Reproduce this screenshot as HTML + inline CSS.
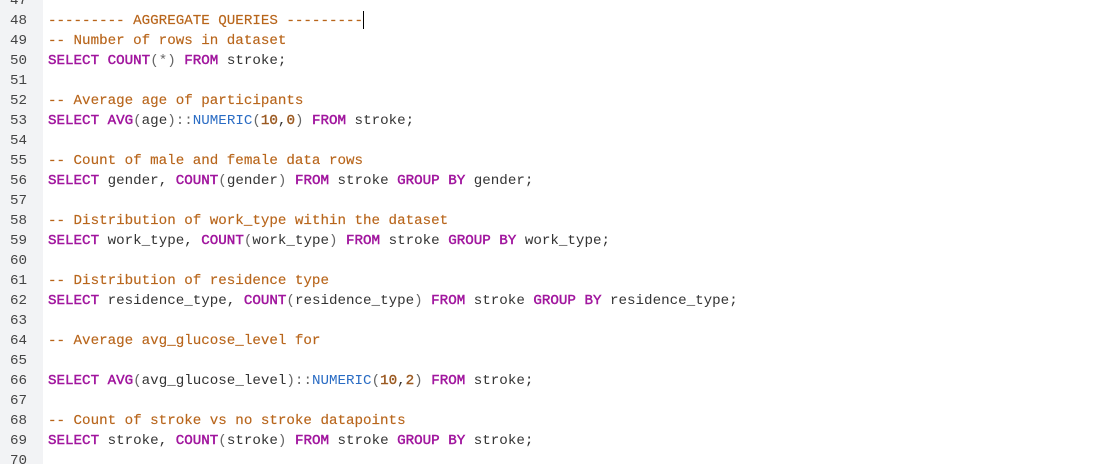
<!DOCTYPE html>
<html><head><style>
html,body{margin:0;padding:0;width:1104px;height:464px;overflow:hidden;background:#fff}
.g{position:absolute;left:0;top:0;width:43px;height:464px;background:#f2f3f5}
.code{position:absolute;left:0;top:-9px;font-family:"Liberation Mono",monospace;font-size:14.2px;color:#333}
.l{height:20px;line-height:20px;white-space:pre;position:relative}
.n{position:absolute;left:0;width:27px;text-align:right;color:#444}
.t{position:absolute;left:48px}
.k{color:#a1169e;-webkit-text-stroke:0.45px #a1169e}
.c{color:#b8651b;-webkit-text-stroke:0.15px #b8651b}
.u{color:#2a6cc4}
.d{color:#9b5a22;-webkit-text-stroke:0.4px #9b5a22}
.p{color:#666}
.cur{display:inline-block;width:1px;height:18px;background:#000;vertical-align:middle}
</style></head><body>
<div class="g"></div>
<div class="code">
<div class="l"><span class="n">47</span></div>
<div class="l"><span class="n">48</span><span class="t"><span class="c">--------- AGGREGATE QUERIES ---------</span><span class="cur"></span></span></div>
<div class="l"><span class="n">49</span><span class="t"><span class="c">-- Number of rows in dataset</span></span></div>
<div class="l"><span class="n">50</span><span class="t"><span class="k">SELECT</span> <span class="k">COUNT</span><span class="p">(*)</span> <span class="k">FROM</span> stroke;</span></div>
<div class="l"><span class="n">51</span></div>
<div class="l"><span class="n">52</span><span class="t"><span class="c">-- Average age of participants</span></span></div>
<div class="l"><span class="n">53</span><span class="t"><span class="k">SELECT</span> <span class="k">AVG</span><span class="p">(</span>age<span class="p">)::</span><span class="u">NUMERIC</span><span class="p">(</span><span class="d">10</span>,<span class="d">0</span><span class="p">)</span> <span class="k">FROM</span> stroke;</span></div>
<div class="l"><span class="n">54</span></div>
<div class="l"><span class="n">55</span><span class="t"><span class="c">-- Count of male and female data rows</span></span></div>
<div class="l"><span class="n">56</span><span class="t"><span class="k">SELECT</span> gender, <span class="k">COUNT</span><span class="p">(</span>gender<span class="p">)</span> <span class="k">FROM</span> stroke <span class="k">GROUP</span> <span class="k">BY</span> gender;</span></div>
<div class="l"><span class="n">57</span></div>
<div class="l"><span class="n">58</span><span class="t"><span class="c">-- Distribution of work_type within the dataset</span></span></div>
<div class="l"><span class="n">59</span><span class="t"><span class="k">SELECT</span> work_type, <span class="k">COUNT</span><span class="p">(</span>work_type<span class="p">)</span> <span class="k">FROM</span> stroke <span class="k">GROUP</span> <span class="k">BY</span> work_type;</span></div>
<div class="l"><span class="n">60</span></div>
<div class="l"><span class="n">61</span><span class="t"><span class="c">-- Distribution of residence type</span></span></div>
<div class="l"><span class="n">62</span><span class="t"><span class="k">SELECT</span> residence_type, <span class="k">COUNT</span><span class="p">(</span>residence_type<span class="p">)</span> <span class="k">FROM</span> stroke <span class="k">GROUP</span> <span class="k">BY</span> residence_type;</span></div>
<div class="l"><span class="n">63</span></div>
<div class="l"><span class="n">64</span><span class="t"><span class="c">-- Average avg_glucose_level for</span></span></div>
<div class="l"><span class="n">65</span></div>
<div class="l"><span class="n">66</span><span class="t"><span class="k">SELECT</span> <span class="k">AVG</span><span class="p">(</span>avg_glucose_level<span class="p">)::</span><span class="u">NUMERIC</span><span class="p">(</span><span class="d">10</span>,<span class="d">2</span><span class="p">)</span> <span class="k">FROM</span> stroke;</span></div>
<div class="l"><span class="n">67</span></div>
<div class="l"><span class="n">68</span><span class="t"><span class="c">-- Count of stroke vs no stroke datapoints</span></span></div>
<div class="l"><span class="n">69</span><span class="t"><span class="k">SELECT</span> stroke, <span class="k">COUNT</span><span class="p">(</span>stroke<span class="p">)</span> <span class="k">FROM</span> stroke <span class="k">GROUP</span> <span class="k">BY</span> stroke;</span></div>
<div class="l"><span class="n">70</span></div>
</div>
</body></html>
